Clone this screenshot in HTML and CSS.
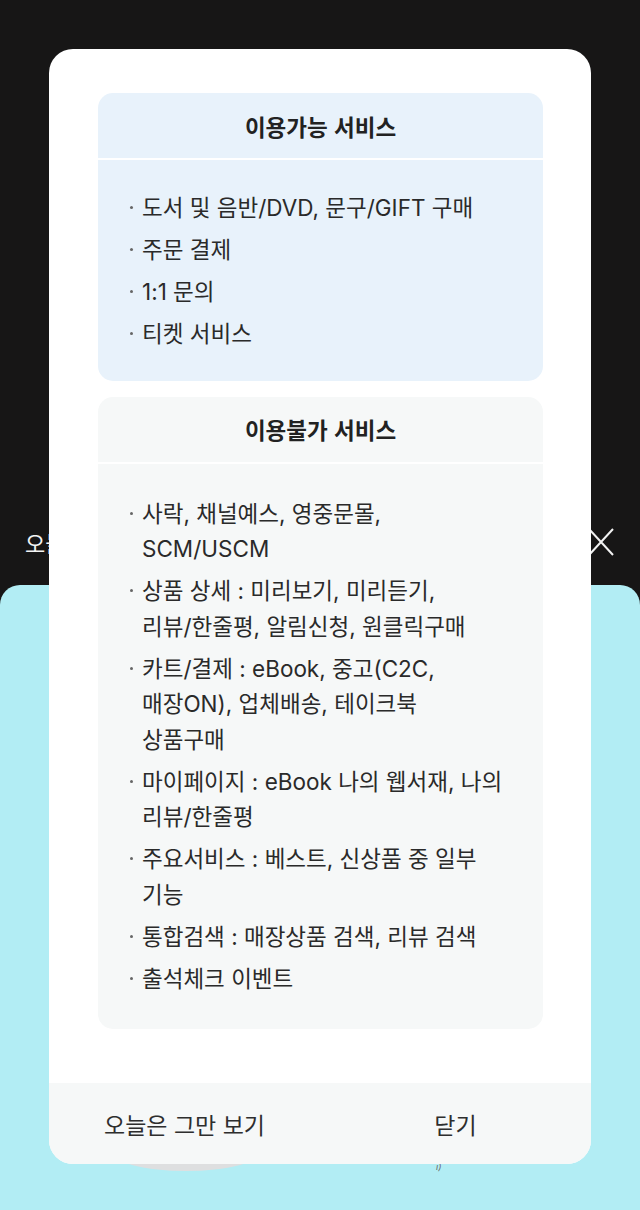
FILE: index.html
```html
<!DOCTYPE html>
<html lang="ko">
<head>
<meta charset="utf-8">
<title>이용 안내</title>
<link rel="stylesheet" href="styles.css">
</head>
<body>
<div class="page">
  <div class="topbar">
    <span class="top-text">오늘 하루</span>
    <svg class="top-close" width="26" height="28" viewBox="0 0 26 28" aria-hidden="true">
      <path d="M1 1 L25 27 M25 1 L1 27" stroke="#f2f2f2" stroke-width="2" fill="none"/>
    </svg>
  </div>
  <div class="sheet">
    <div class="sheet-row">
      <div class="blob"></div>
      <span class="tiny">i)</span>
    </div>
  </div>
</div>

<div class="modal">
  <div class="modal-body">
    <section class="svc svc-ok">
      <h2 class="svc-title">이용가능 서비스</h2>
      <ul class="svc-list">
        <li>도서 및 음반/DVD, 문구/GIFT 구매</li>
        <li>주문 결제</li>
        <li>1:1 문의</li>
        <li>티켓 서비스</li>
      </ul>
    </section>
    <section class="svc svc-no">
      <h2 class="svc-title">이용불가 서비스</h2>
      <ul class="svc-list">
        <li><span>사락, 채널예스, 영중문몰,<br>SCM/USCM</span></li>
        <li><span>상품 상세 : 미리보기, 미리듣기,<br>리뷰/한줄평, 알림신청, 원클릭구매</span></li>
        <li><span>카트/결제 : eBook, 중고(C2C,<br>매장ON), 업체배송, 테이크북<br>상품구매</span></li>
        <li><span>마이페이지 : eBook 나의 웹서재, 나의<br>리뷰/한줄평</span></li>
        <li><span>주요서비스 : 베스트, 신상품 중 일부<br>기능</span></li>
        <li><span>통합검색 : 매장상품 검색, 리뷰 검색</span></li>
        <li><span>출석체크 이벤트</span></li>
      </ul>
    </section>
  </div>
  <div class="modal-foot">
    <button class="foot-btn" type="button">오늘은 그만 보기</button>
    <button class="foot-btn" type="button">닫기</button>
  </div>
</div>
</body>
</html>
```

FILE: styles.css
```css
* { box-sizing: border-box; }

html, body {
  margin: 0;
  padding: 0;
}

body {
  width: 640px;
  height: 1210px;
  overflow: hidden;
  background: #171616;
  font-family: Inter, "Noto Sans CJK KR", sans-serif;
  color: #2a2a2a;
  position: relative;
}

.page {
  height: 1210px;
  display: flex;
  flex-direction: column;
}

.topbar {
  height: 585px;
  display: flex;
  align-items: flex-end;
  justify-content: space-between;
  padding: 0 26px 28px 25px;
}

.top-text {
  color: #f4f4f4;
  font-size: 22px;
  line-height: 30px;
  font-family: "Noto Sans CJK KR", sans-serif;
}

.top-close {
  display: block;
  margin-bottom: 1px;
}

.sheet {
  flex: 1;
  background: #b2edf4;
  border-radius: 20px 20px 0 0;
  padding-top: 546px;
}

.sheet-row {
  display: flex;
  align-items: flex-end;
}

.blob {
  width: 150px;
  height: 40px;
  margin-left: 111px;
  border-radius: 50%;
  background: #dedfe0;
}

.tiny {
  margin-left: 175px;
  margin-bottom: -1px;
  font-size: 9px;
  line-height: 10px;
  color: #666;
  font-style: italic;
}

/* modal overlay */
.modal {
  position: absolute;
  top: 49px;
  left: 49px;
  width: 542px;
  background: #fff;
  border-radius: 24px;
  overflow: hidden;
}

.modal-body {
  padding: 44px 48px 54px 49px;
  display: flex;
  flex-direction: column;
  gap: 16px;
}

.svc {
  border-radius: 15px;
}

.svc-ok { background: #e8f2fb; }
.svc-no { background: #f6f8f8; }

.svc-title {
  margin: 0;
  height: 67px;
  display: flex;
  align-items: center;
  justify-content: center;
  font-size: 22.5px;
  font-weight: 700;
  color: #222;
  border-bottom: 2px solid #fff;
  font-family: "Noto Sans CJK KR", sans-serif;
}

.svc-list {
  list-style: none;
  margin: 0;
  padding: 30px 20px 29px 30px;
  display: flex;
  flex-direction: column;
  gap: 6.5px;
}

.svc-no .svc-list {
  padding-top: 32px;
  padding-bottom: 33px;
}

.svc-list li {
  display: flex;
  font-size: 22.5px;
  line-height: 35.5px;
  color: #2a2a2a;
  white-space: nowrap;
}

.svc-list li::before {
  content: "";
  flex: none;
  width: 3px;
  height: 3px;
  border-radius: 50%;
  background: #666;
  margin: 16px 9px 0 2px;
}

.modal-foot {
  height: 81px;
  background: #f6f8f8;
  display: flex;
}

.foot-btn {
  flex: 1;
  border: 0;
  background: transparent;
  padding: 0;
  font-family: "Noto Sans CJK KR", sans-serif;
  font-size: 23px;
  color: #2e2e2e;
  cursor: pointer;
}
```
